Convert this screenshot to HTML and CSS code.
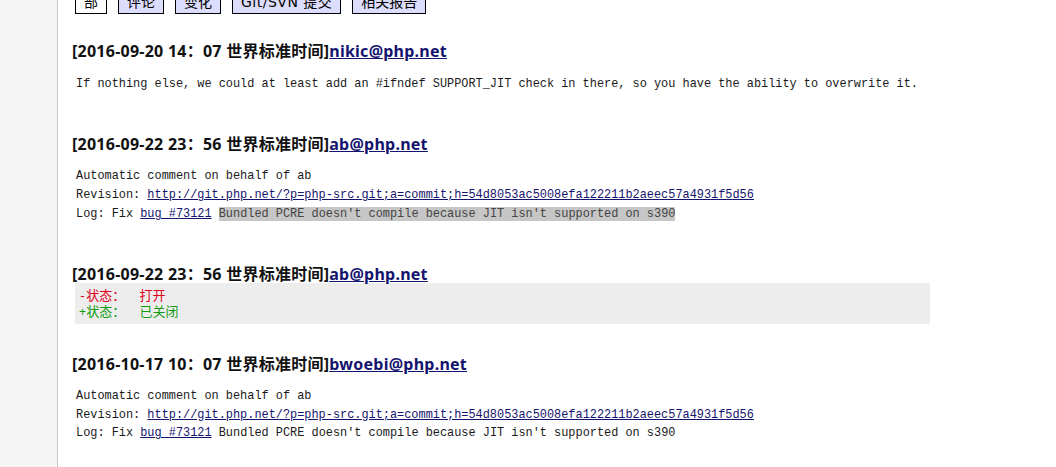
FILE: index.html
```html
<!DOCTYPE html>
<html lang="zh">
  <head>
    <title>Bug #73121</title>
    <link rel="stylesheet" href="styles.css">
  </head>

  <body>
    <div class="Page">
      <div class="Sidebar"></div>

      <div class="Main">
        <!-- tabs -->
        <div class="Tabs">
          <span class="Tab active">全部</span>
          <span class="Tab">评论</span>
          <span class="Tab">变化</span>
          <span class="Tab latin">Git/SVN 提交</span>
          <span class="Tab">相关报告</span>
        </div>

        <div class="Entry first">
          <h4>[2016-09-20 14：07 世界标准时间]<a href="#">nikic@php.net</a></h4>
          <div class="Comment">If nothing else, we could at least add an #ifndef SUPPORT_JIT check in there, so you have the ability to overwrite it.</div>
        </div>

        <div class="Entry">
          <h4>[2016-09-22 23：56 世界标准时间]<a href="#">ab@php.net</a></h4>
          <div class="Comment">Automatic comment on behalf of ab
Revision: <a href="#">http://git.php.net/?p=php-src.git;a=commit;h=54d8053ac5008efa122211b2aeec57a4931f5d56</a>
Log: Fix <a href="#">bug #73121</a> <span class="mark">Bundled PCRE doesn't compile because JIT isn't supported on s390</span></div>
        </div>

        <div class="Entry">
          <h4>[2016-09-22 23：56 世界标准时间]<a href="#">ab@php.net</a></h4>
          <div class="Changes">
            <div class="removed">-<span class="zh">状态：</span>  <span class="zh">打开</span></div>
            <div class="added">+<span class="zh">状态：</span>  <span class="zh">已关闭</span></div>
          </div>
        </div>

        <div class="Entry change">
          <h4>[2016-10-17 10：07 世界标准时间]<a href="#">bwoebi@php.net</a></h4>
          <div class="Comment tight">Automatic comment on behalf of ab
Revision: <a href="#">http://git.php.net/?p=php-src.git;a=commit;h=54d8053ac5008efa122211b2aeec57a4931f5d56</a>
Log: Fix <a href="#">bug #73121</a> Bundled PCRE doesn't compile because JIT isn't supported on s390</div>
        </div>
      </div>
    </div>
  </body>
</html>
```

FILE: styles.css
```css
body {
  margin: 0;
  background: #fff;
  color: #111;
  font-family: "Noto Sans", "Noto Sans CJK SC", sans-serif;
}

.Page {
  display: flex;
  min-height: 100vh;
}

.Sidebar {
  width: 57px;
  flex-shrink: 0;
  background: #f5f5f5;
  border-right: 1px solid #c8c8c8;
}

.Main {
  padding-left: 14px;
  overflow: hidden;
}

/* tab row, scrolled partly out of view */
.Tabs {
  display: flex;
  align-items: flex-end;
  gap: 11px;
  margin-top: -30px;
  padding-left: 3px;
}

.Tab {
  border: 1px solid #000;
  background: #dcdcfc;
  padding: 1px 8px;
  font-family: "DejaVu Sans", "Noto Sans CJK SC", sans-serif;
  font-size: 14px;
  line-height: 20px;
  color: #000;
  white-space: nowrap;
}

.Tab.latin {
  letter-spacing: 0.5px;
}

.Tab.active {
  background: #fff;
  width: 14px;
  white-space: normal;
  text-align: center;
}

.Entry {
  margin-top: 40px;
}

.Entry.first {
  margin-top: 27px;
  margin-bottom: 1px;
}

.Entry.first .Comment {
  margin-top: 14px;
}

.Entry.change {
  margin-top: 30px;
}

h4 {
  margin: 0;
  font-size: 16px;
  line-height: 20px;
  font-weight: bold;
  letter-spacing: 0.25px;
  white-space: nowrap;
}

a {
  color: #14146e;
}

.Comment {
  margin: 13px 0 0 4px;
  font-family: "Liberation Mono", "Noto Sans CJK SC", monospace;
  font-size: 11.9px;
  line-height: 19px;
  color: #1a1a1a;
  white-space: pre;
}

.Comment.tight {
  line-height: 18.5px;
}

.mark {
  background: #c6c6c6;
  color: #444;
}

.Changes {
  margin: -1px 0 0 3px;
  width: 851px;
  padding: 6px 0 3px 4px;
  background: #ededed;
  font-family: "Liberation Mono", "Noto Sans CJK SC", monospace;
  font-size: 11.9px;
  line-height: 15px;
}

.Changes div {
  white-space: pre;
}

.Changes .zh {
  font-size: 13px;
}

.removed {
  color: #e0001b;
}

.added {
  color: #109c10;
}
```
